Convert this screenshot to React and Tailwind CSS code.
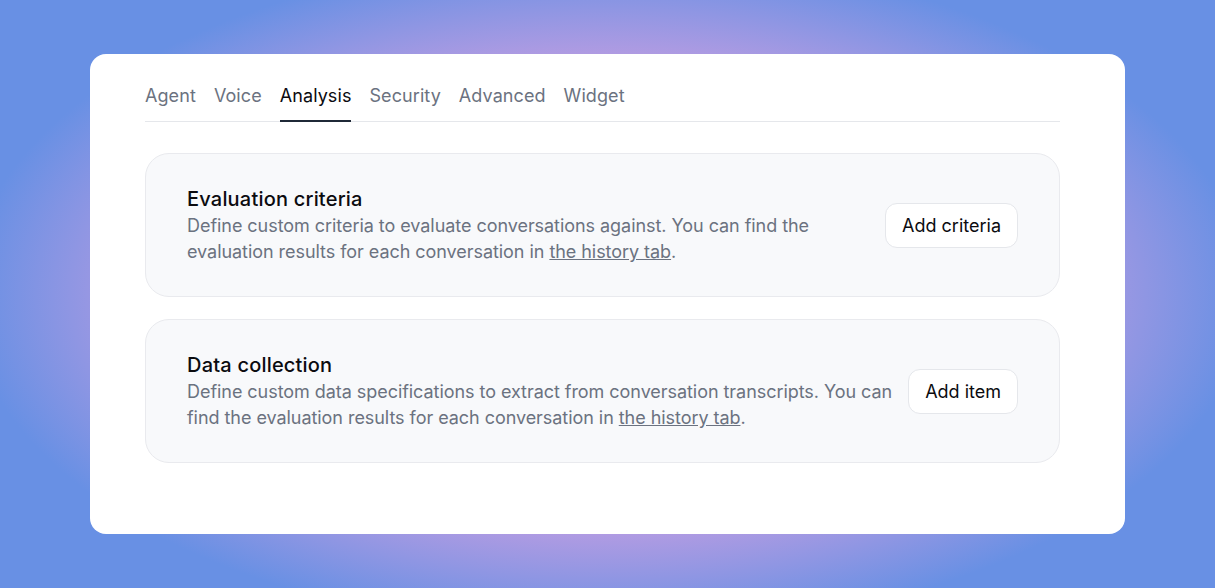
import React from 'react';

const tabs = ['Agent', 'Voice', 'Analysis', 'Security', 'Advanced', 'Widget'];

const Section = ({ title, children, action }) => (
  <div className="flex items-center gap-3 rounded-[24px] border border-[#e9eaee] bg-[#f8f9fb] pl-[41px] pr-[41px] py-[31px]">
    <div className="flex-1">
      <h3 className="text-[20px] leading-[28px] font-medium tracking-[0.2px] text-[#0b0b0f]">{title}</h3>
      <p className="text-[18px] leading-[26px] tracking-[-0.05px] text-[#6b7280]">{children}</p>
    </div>
    <button className="shrink-0 h-[45px] rounded-[12px] border border-[#e5e7eb] bg-white px-4 text-[18px] text-[#0b0b0f]">
      {action}
    </button>
  </div>
);

export default function App() {
  return (
    <div
      className="w-[1215px] h-[588px] flex items-start justify-center pt-[54px] font-['Inter',sans-serif]"
      style={{
        background:
          'radial-gradient(ellipse 640px 340px at 50% 50%, #c8a0e0 0%, #b69ce2 68%, #6890e4 100%)',
        backgroundColor: '#6890e4',
      }}
    >
      <div className="w-[1035px] h-[480px] rounded-[16px] bg-white pl-[55px] pr-[65px] pt-[27px]">
        <nav className="flex gap-[18px] border-b border-[#e5e7eb]">
          {tabs.map((t) => (
            <div
              key={t}
              className={`pb-[9px] text-[18px] leading-[30px] tracking-[0.08px] ${
                t === 'Analysis'
                  ? 'text-[#0b0b0f] border-b-2 border-[#1f2937] -mb-px'
                  : 'text-[#6b7280]'
              }`}
            >
              {t}
            </div>
          ))}
        </nav>
        <div className="mt-[31px] flex flex-col gap-[22px]">
          <Section title="Evaluation criteria" action="Add criteria">
            Define custom criteria to evaluate conversations against. You can find the evaluation results
            for each conversation in <span className="underline">the history tab</span>.
          </Section>
          <Section title="Data collection" action="Add item">
            Define custom data specifications to extract from conversation transcripts. You can find the
            evaluation results for each conversation in <span className="underline">the history tab</span>.
          </Section>
        </div>
      </div>
    </div>
  );
}
